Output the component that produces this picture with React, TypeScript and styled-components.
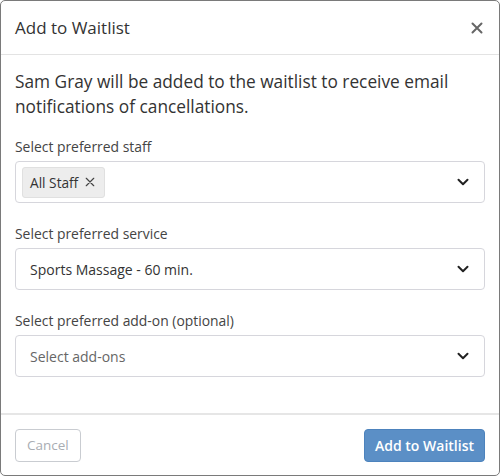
import styled, { createGlobalStyle } from 'styled-components'

const GlobalStyle = createGlobalStyle`
  html,
  body {
    margin: 0;
    padding: 0;
    background: #ffffff;
  }

  body {
    font-family: 'Open Sans', 'Liberation Sans', sans-serif;
    color: #333333;
  }
`

const ChevronDown = () => (
  <svg width='14' height='14' viewBox='0 0 14 14' fill='none'>
    <path
      d='M2.5 4.8 L7 9.2 L11.5 4.8'
      stroke='#222'
      strokeWidth='2'
      strokeLinecap='round'
      strokeLinejoin='round'
    />
  </svg>
)

const Cross = ({ size, color, weight }: { size: number; color: string; weight: number }) => (
  <svg width={size} height={size} viewBox='0 0 12 12' fill='none'>
    <path
      d='M1.5 1.5 L10.5 10.5 M10.5 1.5 L1.5 10.5'
      stroke={color}
      strokeWidth={weight}
      strokeLinecap='round'
    />
  </svg>
)

const App = () => {
  return (
    <>
      <GlobalStyle />
      <Modal>
        <Header>
          <Title>Add to Waitlist</Title>
          <CloseButton aria-label='Close'>
            <Cross size={12} color='#666' weight={2} />
          </CloseButton>
        </Header>
        <Body>
          <Intro>
            Sam Gray will be added to the waitlist to receive email
            notifications of cancellations.
          </Intro>
          <Field>
            <Label>Select preferred staff</Label>
            <Select $compact>
              <Tags>
                <Tag>
                  All Staff
                  <Cross size={10} color='#444' weight={1.4} />
                </Tag>
              </Tags>
              <ChevronDown />
            </Select>
          </Field>
          <Field>
            <Label>Select preferred service</Label>
            <Select>
              <Value>Sports Massage - 60 min.</Value>
              <ChevronDown />
            </Select>
          </Field>
          <Field>
            <Label>Select preferred add-on (optional)</Label>
            <Select>
              <Value $placeholder>Select add-ons</Value>
              <ChevronDown />
            </Select>
          </Field>
        </Body>
        <Footer>
          <Button>Cancel</Button>
          <Button $primary>Add to Waitlist</Button>
        </Footer>
      </Modal>
    </>
  )
}

const Modal = styled.div`
  box-sizing: border-box;
  width: 500px;
  height: 476px;

  display: flex;
  flex-direction: column;

  background: #ffffff;
  border: 1.5px solid #7a7a7a;
  border-radius: 5px;
  overflow: hidden;
`

const Header = styled.div`
  height: 54px;
  padding: 0 14px;
  box-sizing: border-box;

  display: flex;
  align-items: center;
  justify-content: space-between;

  border-bottom: 1px solid #e3e3e3;
`

const Title = styled.h2`
  margin: 0;
  font-size: 17px;
  font-weight: 400;
  color: #333333;
`

const CloseButton = styled.button`
  padding: 0;
  margin-right: 2px;
  border: none;
  background: none;
  display: flex;
`

const Body = styled.div`
  flex: 1;
  padding: 14px 14px 0;
`

const Intro = styled.p`
  margin: 0 0 19px;
  font-size: 17.3px;
  line-height: 25px;
  color: #333333;
`

const Field = styled.div`
  margin-bottom: 22px;
`

const Label = styled.div`
  margin-bottom: 5px;
  font-size: 13.9px;
  line-height: 18px;
  color: #444444;
`

const Select = styled.div<{ $compact?: boolean }>`
  box-sizing: border-box;
  height: 42px;
  padding: 0 14px 0 ${(props) => (props.$compact ? '6px' : '14px')};

  display: flex;
  align-items: center;
  justify-content: space-between;

  border: 1px solid #d6d6dc;
  border-radius: 4px;
`

const Tags = styled.div`
  display: flex;
  gap: 6px;
`

const Tag = styled.span`
  height: 31px;
  padding: 0 9px 0 7px;
  box-sizing: border-box;

  display: flex;
  align-items: center;
  gap: 7px;

  background: #ededed;
  border: 1px solid #e0e0e0;
  border-radius: 3px;
  font-size: 13.7px;
  color: #333333;
`

const Value = styled.span<{ $placeholder?: boolean }>`
  font-size: 14px;
  color: ${(props) => (props.$placeholder ? '#666666' : '#333333')};
`

const Footer = styled.div`
  height: 62px;
  padding: 0 14px;
  box-sizing: border-box;

  display: flex;
  align-items: center;
  justify-content: space-between;

  border-top: 2px solid #e6e6e6;
`

const Button = styled.button<{ $primary?: boolean }>`
  height: 33px;
  padding: 0 ${(props) => (props.$primary ? '10px' : '11px')};

  font-family: 'Open Sans', 'Liberation Sans', sans-serif;
  font-size: ${(props) => (props.$primary ? '14px' : '13.5px')};
  font-weight: ${(props) => (props.$primary ? 600 : 400)};
  color: ${(props) => (props.$primary ? '#ffffff' : '#a9adb3')};

  background: ${(props) => (props.$primary ? '#5b8fc6' : '#ffffff')};
  border: 1px solid ${(props) => (props.$primary ? '#4d83bd' : '#c9ccd1')};
  border-radius: 4px;
`

export default App
